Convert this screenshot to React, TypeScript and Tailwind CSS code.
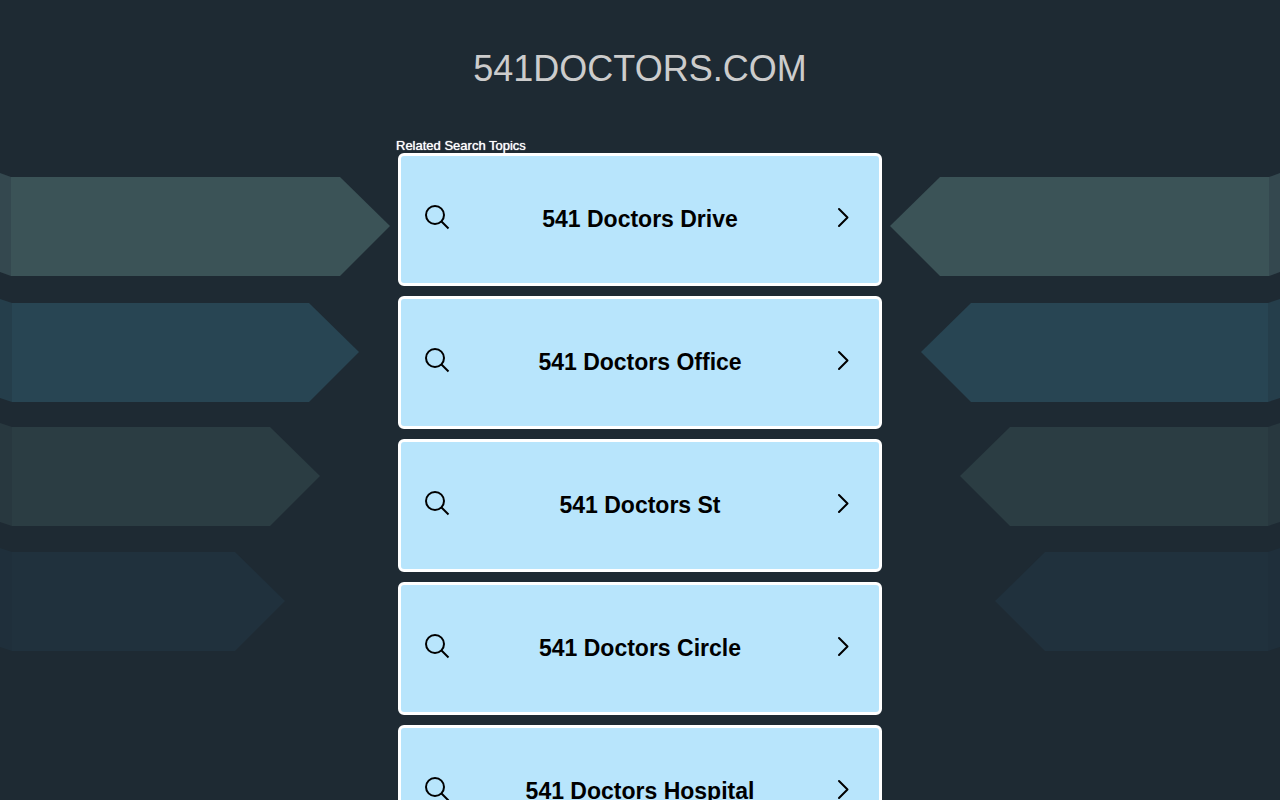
import React from "react";

const topics = [
  "541 Doctors Drive",
  "541 Doctors Office",
  "541 Doctors St",
  "541 Doctors Circle",
  "541 Doctors Hospital",
];

const ribbons = [
  { top: 177, fold: 11, end: 340, face: "#3b5357", side: "#34484f" },
  { top: 303, fold: 12, end: 309, face: "#284553", side: "#253e4b" },
  { top: 427, fold: 12, end: 270, face: "#2b3d43", side: "#28383f" },
  { top: 552, fold: 12, end: 235, face: "#20313d", side: "#1f2f3b" },
];

const Ribbons: React.FC = () => (
  <>
    {ribbons.map(({ top, fold, end, face, side }) => (
      <g key={top}>
        <path
          d={`M0 ${top - 4}L${fold} ${top}V${top + 99}L0 ${top + 95}Z`}
          fill={side}
        />
        <path
          d={`M${fold} ${top}H${end}L${end + 50} ${top + 49}L${end} ${top + 99}H${fold}Z`}
          fill={face}
        />
      </g>
    ))}
  </>
);

const Background: React.FC = () => (
  <svg
    aria-hidden="true"
    viewBox="0 0 1280 800"
    className="absolute top-0 left-1/2 h-[800px] w-[1280px] max-w-none -translate-x-1/2"
  >
    <Ribbons />
    <g transform="translate(1280 0) scale(-1 1)">
      <Ribbons />
    </g>
  </svg>
);

const SearchIcon: React.FC = () => (
  <svg
    aria-hidden="true"
    viewBox="0 0 26 26"
    className="mb-1 size-[26px] shrink-0"
    fill="none"
    stroke="#000"
    strokeWidth="2"
  >
    <circle cx="11" cy="11" r="9" />
    <path d="M17 17L24.5 24.5" />
  </svg>
);

const ChevronIcon: React.FC = () => (
  <svg
    aria-hidden="true"
    viewBox="0 0 26 26"
    className="mb-1 size-[26px] shrink-0"
    fill="none"
    stroke="#000"
    strokeWidth="2"
    strokeLinecap="round"
    strokeLinejoin="round"
  >
    <path d="M9 5L17.5 13.5L9 22" />
  </svg>
);

const App: React.FC = () => {
  return (
    <div className="relative min-h-screen overflow-hidden bg-[#1e2a33] font-['Liberation_Sans',Arial,sans-serif]">
      <Background />
      <div className="relative mx-auto max-w-[488px] pb-12">
        <h1 className="pt-12 text-center text-4xl leading-[42px] text-[#cccccc]">
          541DOCTORS.COM
        </h1>
        <h2 className="mt-12 text-[13px] leading-[15px] text-white text-shadow-[0_0_1px_#fff]">
          Related Search Topics
        </h2>
        <ul className="flex flex-col gap-[10px] px-[2px]">
          {topics.map((topic) => (
            <li key={topic}>
              <a
                href="#"
                className="flex h-[133px] items-center rounded-md border-3 border-white bg-[#b8e5fc] px-[23px] pb-[2px] text-black hover:bg-[#a5dcf8]"
              >
                <SearchIcon />
                <span className="flex-1 text-center text-[23px] leading-7 font-bold">
                  {topic}
                </span>
                <ChevronIcon />
              </a>
            </li>
          ))}
        </ul>
      </div>
    </div>
  );
};

export default App;
